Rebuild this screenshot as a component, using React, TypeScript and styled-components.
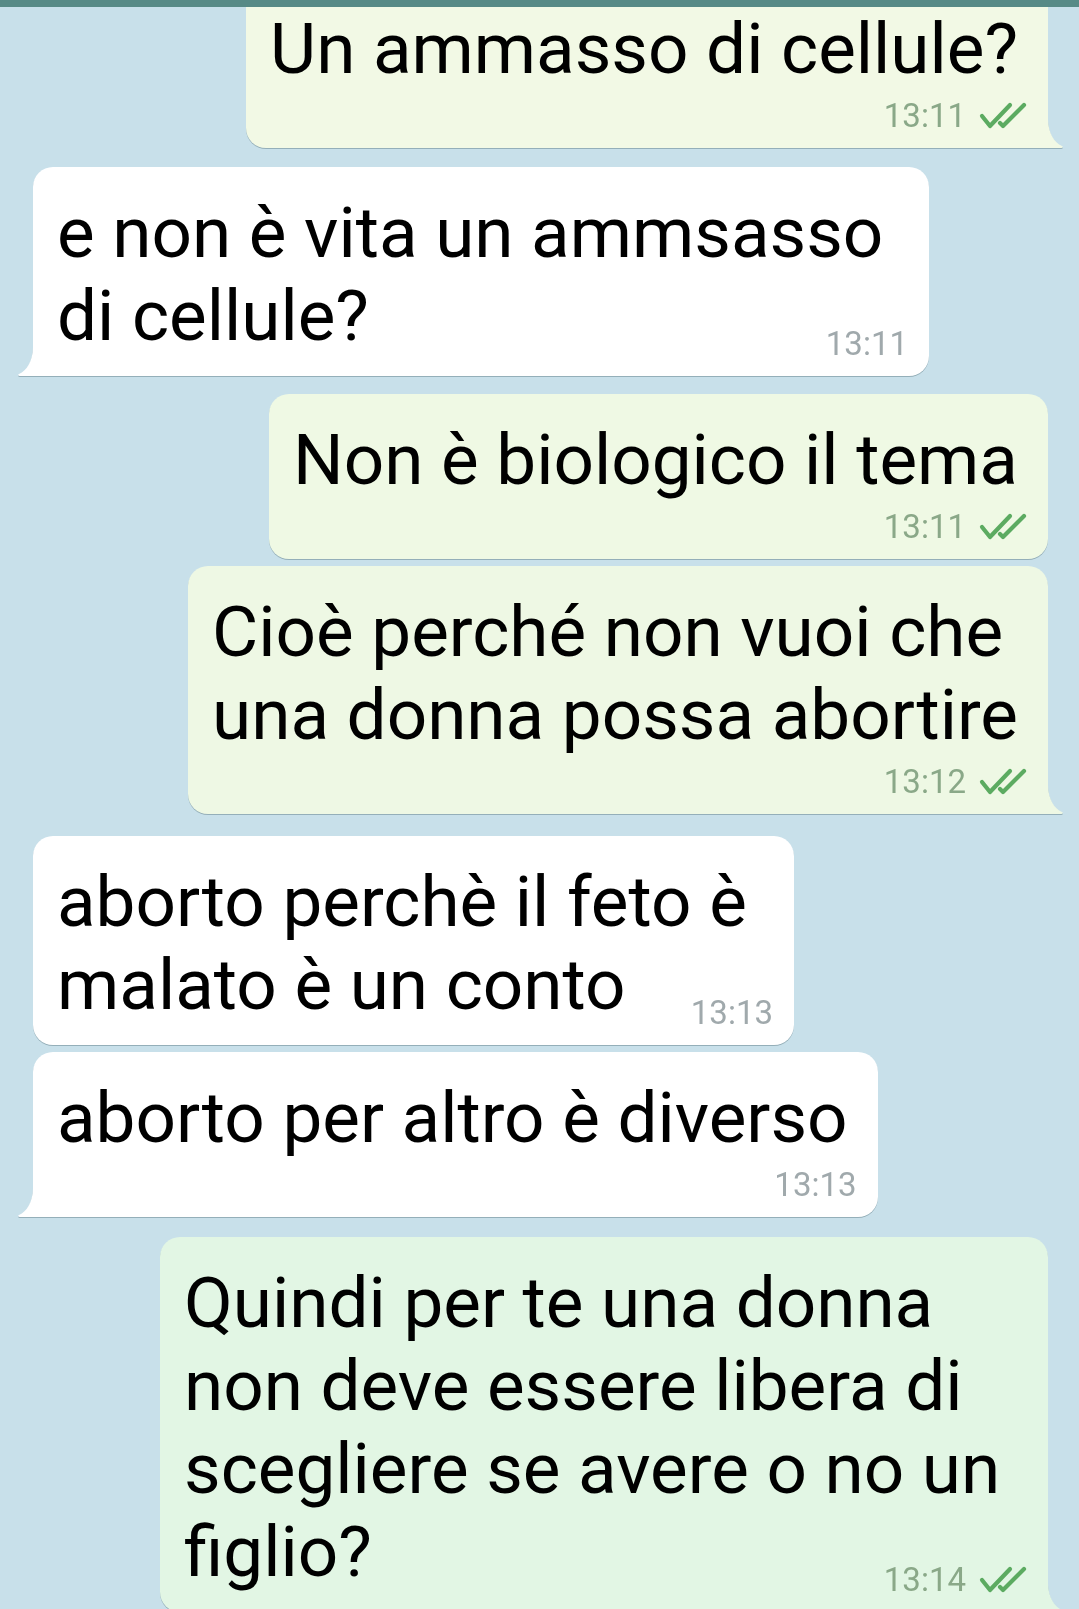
import React from "react";
import styled, { createGlobalStyle } from "styled-components";

type Side = "in" | "out";

const Global = createGlobalStyle`
  html, body {
    margin: 0;
    padding: 0;
    background: #c8e0ea;
  }
  body {
    font-family: Roboto, "Noto Sans", "Liberation Sans", sans-serif;
    -webkit-font-smoothing: antialiased;
  }
`;

const Screen = styled.div`
  position: relative;
  width: 1079px;
  height: 1609px;
  overflow: hidden;
  background: #c8e0ea;
`;

const TopBar = styled.div`
  position: absolute;
  top: 0;
  left: 0;
  right: 0;
  height: 7px;
  background: #578a86;
  z-index: 2;
`;

const ChatList = styled.div`
  display: flex;
  flex-direction: column;
  margin-top: -17px;
  padding: 0 31px 0 33px;
`;

const Row = styled.div<{ $side: Side; $gap: number }>`
  display: flex;
  justify-content: ${(p) => (p.$side === "out" ? "flex-end" : "flex-start")};
  margin-top: ${(p) => p.$gap}px;
`;

const Bubble = styled.div<{
  $side: Side;
  $tail: boolean;
  $bg: string;
  $width?: number;
}>`
  position: relative;
  box-sizing: border-box;
  display: grid;
  width: ${(p) => (p.$width ? `${p.$width}px` : "auto")};
  padding: 24px 21px 13px 24px;
  background: ${(p) => p.$bg};
  border-radius: 20px;
  border-bottom-right-radius: ${(p) => (p.$tail && p.$side === "out" ? 0 : 20)}px;
  border-bottom-left-radius: ${(p) => (p.$tail && p.$side === "in" ? 0 : 20)}px;
  filter: drop-shadow(0 1.5px 0.6px rgba(40, 70, 80, 0.32));
`;

const Text = styled.div`
  grid-row: 1;
  grid-column: 1;
  margin-right: 9px;
  font-size: 71px;
  line-height: 83px;
  color: #000;
  white-space: pre-line;
`;

const Meta = styled.div<{ $side: Side; $inline: boolean }>`
  grid-row: 2;
  grid-column: 1;
  justify-self: end;
  display: flex;
  align-items: center;
  gap: 13px;
  margin-top: ${(p) => (p.$inline ? -32 : 7)}px;
  font-size: 33px;
  line-height: 38px;
  color: ${(p) => (p.$side === "out" ? "#8aa888" : "#a0a9ac")};
`;

const TailSvg = styled.svg<{ $side: Side }>`
  position: absolute;
  bottom: 0;
  width: 17px;
  height: 28px;
  ${(p) =>
    p.$side === "out"
      ? "left: calc(100% - 1px);"
      : "right: calc(100% - 1px); transform: scaleX(-1);"}
`;

const Tail: React.FC<{ side: Side; color: string }> = ({ side, color }) => (
  <TailSvg $side={side} viewBox="0 0 17 28">
    <path
      d="M0 0 L1 0 C1.5 13 7 22.5 15 26 Q17 27.2 14.5 28 L0 28 Z"
      fill={color}
    />
  </TailSvg>
);

const Ticks = () => (
  <svg width="48" height="28" viewBox="0 0 48 28">
    <g
      fill="none"
      stroke="#5cab61"
      strokeWidth="4.2"
      strokeLinecap="round"
      strokeLinejoin="round"
    >
      <path d="M3 14 L11 24 L31 3" />
      <path d="M21 21 L24 24 L45 3" />
    </g>
  </svg>
);

type Msg = {
  side: Side;
  text: string;
  time: string;
  tail: boolean;
  inline?: boolean;
  width?: number;
  gap: number;
  bg: string;
};

const messages: Msg[] = [
  { side: "out", text: "Un ammasso di cellule?", time: "13:11", tail: true, gap: 0, bg: "#f2f9e5" },
  {
    side: "in",
    text: "e non è vita un ammsasso\ndi cellule?",
    time: "13:11",
    tail: true,
    inline: true,
    width: 896,
    gap: 19,
    bg: "#ffffff",
  },
  { side: "out", text: "Non è biologico il tema", time: "13:11", tail: false, gap: 18, bg: "#eff9e4" },
  {
    side: "out",
    text: "Cioè perché non vuoi che\nuna donna possa abortire",
    time: "13:12",
    tail: true,
    gap: 7,
    bg: "#eef8e4",
  },
  {
    side: "in",
    text: "aborto perchè il feto è\nmalato è un conto",
    time: "13:13",
    tail: false,
    inline: true,
    width: 761,
    gap: 22,
    bg: "#ffffff",
  },
  { side: "in", text: "aborto per altro è diverso", time: "13:13", tail: true, gap: 7, bg: "#ffffff" },
  {
    side: "out",
    text: "Quindi per te una donna\nnon deve essere libera di\nscegliere se avere o no un\nfiglio?",
    time: "13:14",
    tail: true,
    inline: true,
    width: 888,
    gap: 20,
    bg: "#e2f6e4",
  },
];

export default function App() {
  return (
    <Screen>
      <Global />
      <TopBar />
      <ChatList>
        {messages.map((m, i) => (
          <Row key={i} $side={m.side} $gap={m.gap}>
            <Bubble $side={m.side} $tail={m.tail} $bg={m.bg} $width={m.width}>
              <Text>{m.text}</Text>
              <Meta $side={m.side} $inline={!!m.inline}>
                <span>{m.time}</span>
                {m.side === "out" && <Ticks />}
              </Meta>
              {m.tail && <Tail side={m.side} color={m.bg} />}
            </Bubble>
          </Row>
        ))}
      </ChatList>
    </Screen>
  );
}
